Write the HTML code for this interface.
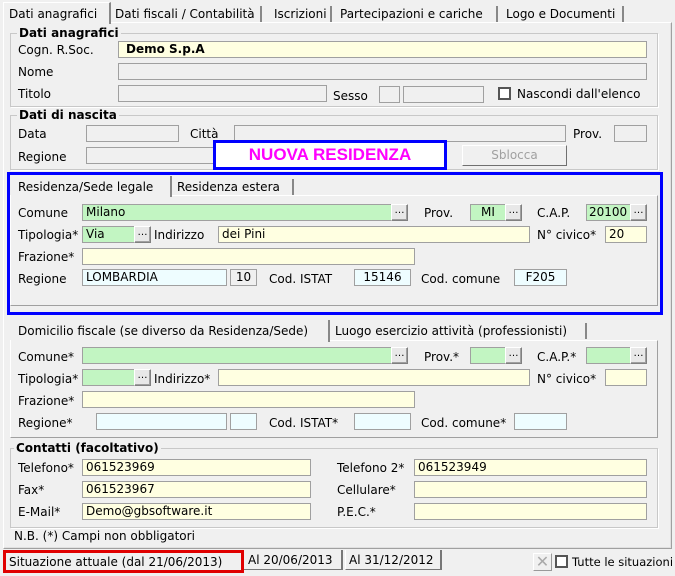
<!DOCTYPE html>
<html><head><meta charset="utf-8"><style>
*{margin:0;padding:0;box-sizing:border-box}
body{width:675px;height:576px;background:#f0f0f0;position:relative;overflow:hidden;font-family:"DejaVu Sans",Verdana,sans-serif;font-size:12px;color:#000}
div,span{position:absolute}
.l{white-space:nowrap;line-height:14px}
.i{border:1px solid #a0a0a0;background:#f0f0f0;height:17px;line-height:15px;padding-left:3px;white-space:nowrap;overflow:hidden}
.y{background:#ffffe1}.g{background:#c2f5c2}.c{background:#eefdff}
.b{width:17px;height:17px;border:1px solid #808080;border-top-color:#fff;border-left-color:#fff;background:#e8e8e8;box-shadow:inset -1px -1px #a0a0a0;font-size:10px;line-height:11px;text-align:center}
.grp{border:1px solid #c8c8c8;box-shadow:1px 1px #fff}
.gt{background:#f0f0f0;font-weight:bold;padding:0 2px;line-height:14px}
.tab{line-height:16px;padding:0 4px;border-right:2px solid #888;white-space:nowrap;overflow:hidden}
.ctr{text-align:center;padding-left:0}
</style></head><body>
<div style="left:3px;top:22px;width:669px;height:527px;border:1px solid #a0a0a0;border-top-color:#fff;border-left-color:#fff;box-shadow:inset -1px -1px #e0e0e0"></div>
<div style="left:3px;top:2px;width:108px;height:22px;background:#f0f0f0;border:1px solid #fff;border-bottom:none;border-right:2px solid #888"></div>
<div class="l" style="left:9px;top:7px">Dati anagrafici</div>
<div class="tab" style="left:111px;top:6px;width:151px">Dati fiscali / Contabilità</div>
<div class="tab" style="left:270px;top:6px;width:62px">Iscrizioni</div>
<div class="tab" style="left:336px;top:6px;width:162px">Partecipazioni e cariche</div>
<div class="tab" style="left:502px;top:6px;width:122px">Logo e Documenti</div>

<div class="grp" style="left:10px;top:33px;width:648px;height:74px"></div>
<div class="gt l" style="left:17px;top:26px">Dati anagrafici</div>
<div class="l" style="left:18px;top:43px">Cogn. R.Soc.</div>
<div class="i y" style="left:118px;top:41px;width:529px;font-weight:bold;padding-left:7px">Demo S.p.A</div>
<div class="l" style="left:18px;top:65px">Nome</div>
<div class="i" style="left:118px;top:63px;width:529px"></div>
<div class="l" style="left:18px;top:87px">Titolo</div>
<div class="i" style="left:118px;top:85px;width:209px"></div>
<div class="l" style="left:333px;top:89px">Sesso</div>
<div class="i" style="left:379px;top:86px;width:21px"></div>
<div class="i" style="left:403px;top:86px;width:81px"></div>
<div style="left:498px;top:87px;width:13px;height:13px;border:2px solid #555;background:#fff"></div>
<div class="l" style="left:517px;top:87px">Nascondi dall'elenco</div>

<div class="grp" style="left:10px;top:115px;width:648px;height:55px"></div>
<div class="gt l" style="left:17px;top:108px">Dati di nascita</div>
<div class="l" style="left:18px;top:127px">Data</div>
<div class="i" style="left:86px;top:125px;width:93px"></div>
<div class="l" style="left:190px;top:127px">Città</div>
<div class="i" style="left:234px;top:125px;width:332px"></div>
<div class="l" style="left:573px;top:127px">Prov.</div>
<div class="i" style="left:614px;top:125px;width:33px"></div>
<div class="l" style="left:18px;top:150px">Regione</div>
<div class="i" style="left:86px;top:147px;width:130px"></div>
<div style="left:213px;top:140px;width:234px;height:30px;border:3px solid #0000ff;background:#fff;color:#ff00ff;font-family:'Liberation Sans',sans-serif;font-weight:bold;font-size:17px;line-height:24px;text-align:center">NUOVA RESIDENZA</div>
<div style="left:462px;top:145px;width:105px;height:21px;border:1px solid #fff;border-right-color:#707070;border-bottom-color:#707070;background:#f0f0f0;color:#a0a0a0;text-align:center;line-height:18px">Sblocca</div>

<div style="left:7px;top:172px;width:656px;height:143px;border:3px solid #0000ff"></div>
<div style="left:10px;top:195px;width:648px;height:111px;border:1px solid #fff;border-right-color:#a0a0a0;border-bottom-color:#a0a0a0"></div>
<div style="left:11px;top:176px;width:161px;height:21px;background:#f0f0f0;border-right:2px solid #888"></div>
<div class="l" style="left:18px;top:180px">Residenza/Sede legale</div>
<div class="tab" style="left:173px;top:179px;width:121px">Residenza estera</div>

<div class="l" style="left:18px;top:206px">Comune</div>
<div class="i g" style="left:82px;top:204px;width:311px">Milano</div><div class="b" style="left:391px;top:204px">…</div>
<div class="l" style="left:424px;top:206px">Prov.</div>
<div class="i g ctr" style="left:470px;top:204px;width:36px">MI</div><div class="b" style="left:505px;top:204px">…</div>
<div class="l" style="left:537px;top:206px">C.A.P.</div>
<div class="i g" style="left:586px;top:204px;width:46px;padding-left:2px">20100</div><div class="b" style="left:630px;top:204px">…</div>

<div class="l" style="left:18px;top:228px">Tipologia*</div>
<div class="i g" style="left:82px;top:226px;width:53px">Via</div><div class="b" style="left:134px;top:226px">…</div>
<div class="l" style="left:154px;top:228px">Indirizzo</div>
<div class="i y" style="left:218px;top:226px;width:312px">dei Pini</div>
<div class="l" style="left:537px;top:228px">N° civico*</div>
<div class="i y" style="left:605px;top:226px;width:42px">20</div>

<div class="l" style="left:18px;top:250px">Frazione*</div>
<div class="i y" style="left:82px;top:248px;width:333px"></div>

<div class="l" style="left:18px;top:272px">Regione</div>
<div class="i c" style="left:82px;top:269px;width:145px">LOMBARDIA</div>
<div class="i ctr" style="left:230px;top:269px;width:27px">10</div>
<div class="l" style="left:269px;top:272px">Cod. ISTAT</div>
<div class="i c ctr" style="left:354px;top:269px;width:57px">15146</div>
<div class="l" style="left:421px;top:272px">Cod. comune</div>
<div class="i c ctr" style="left:514px;top:269px;width:53px">F205</div>

<div style="left:10px;top:340px;width:648px;height:98px;border:1px solid #fff;border-right-color:#a0a0a0;border-bottom-color:#a0a0a0"></div>
<div style="left:11px;top:320px;width:319px;height:22px;background:#f0f0f0;border-right:2px solid #888"></div>
<div class="l" style="left:18px;top:324px">Domicilio fiscale (se diverso da Residenza/Sede)</div>
<div class="tab" style="left:331px;top:323px;width:256px">Luogo esercizio attività (professionisti)</div>

<div class="l" style="left:18px;top:350px">Comune*</div>
<div class="i g" style="left:82px;top:347px;width:311px"></div><div class="b" style="left:391px;top:347px">…</div>
<div class="l" style="left:424px;top:350px">Prov.*</div>
<div class="i g" style="left:470px;top:347px;width:36px"></div><div class="b" style="left:505px;top:347px">…</div>
<div class="l" style="left:537px;top:350px">C.A.P.*</div>
<div class="i g" style="left:586px;top:347px;width:46px"></div><div class="b" style="left:630px;top:347px">…</div>

<div class="l" style="left:18px;top:372px">Tipologia*</div>
<div class="i g" style="left:82px;top:369px;width:53px"></div><div class="b" style="left:134px;top:369px">…</div>
<div class="l" style="left:154px;top:372px">Indirizzo*</div>
<div class="i y" style="left:218px;top:369px;width:312px"></div>
<div class="l" style="left:537px;top:372px">N° civico*</div>
<div class="i y" style="left:605px;top:369px;width:42px"></div>

<div class="l" style="left:18px;top:394px">Frazione*</div>
<div class="i y" style="left:82px;top:391px;width:333px"></div>

<div class="l" style="left:18px;top:416px">Regione*</div>
<div class="i c" style="left:96px;top:413px;width:131px"></div>
<div class="i c" style="left:230px;top:413px;width:27px"></div>
<div class="l" style="left:269px;top:416px">Cod. ISTAT*</div>
<div class="i c" style="left:354px;top:413px;width:57px"></div>
<div class="l" style="left:421px;top:416px">Cod. comune*</div>
<div class="i c" style="left:514px;top:413px;width:53px"></div>

<div class="grp" style="left:10px;top:448px;width:648px;height:80px"></div>
<div class="gt l" style="left:14px;top:441px">Contatti (facoltativo)</div>
<div class="l" style="left:18px;top:461px">Telefono*</div>
<div class="i y" style="left:82px;top:459px;width:229px">061523969</div>
<div class="l" style="left:337px;top:461px">Telefono 2*</div>
<div class="i y" style="left:414px;top:459px;width:233px">061523949</div>
<div class="l" style="left:18px;top:483px">Fax*</div>
<div class="i y" style="left:82px;top:481px;width:229px">061523967</div>
<div class="l" style="left:337px;top:483px">Cellulare*</div>
<div class="i y" style="left:414px;top:481px;width:233px"></div>
<div class="l" style="left:18px;top:505px">E-Mail*</div>
<div class="i y" style="left:82px;top:503px;width:229px">Demo@gbsoftware.it</div>
<div class="l" style="left:337px;top:505px">P.E.C.*</div>
<div class="i y" style="left:414px;top:503px;width:233px"></div>
<div class="l" style="left:14px;top:529px">N.B. (*) Campi non obbligatori</div>

<div style="left:3px;top:550px;width:241px;height:23px;border:3px solid #e00000;background:#f0f0f0"></div>
<div class="l" style="left:9px;top:555px">Situazione attuale (dal 21/06/2013)</div>
<div style="left:244px;top:550px;width:99px;height:20px;border-right:2px solid #777;border-bottom:1px solid #777"></div>
<div class="l" style="left:248px;top:553px">Al 20/06/2013</div>
<div style="left:345px;top:550px;width:97px;height:20px;border-right:2px solid #777;border-bottom:1px solid #777;border-left:1px solid #fff"></div>
<div class="l" style="left:349px;top:553px">Al 31/12/2012</div>
<div style="left:533px;top:553px;width:19px;height:18px;border:1px solid #fff;border-right-color:#999;border-bottom-color:#999;color:#aaa;font-size:16px;line-height:15px;text-align:center">✕</div>
<div style="left:555px;top:555px;width:13px;height:13px;border:2px solid #555;background:#fff"></div>
<div class="l" style="left:572px;top:555px;font-size:11.5px">Tutte le situazioni</div>
</body></html>
